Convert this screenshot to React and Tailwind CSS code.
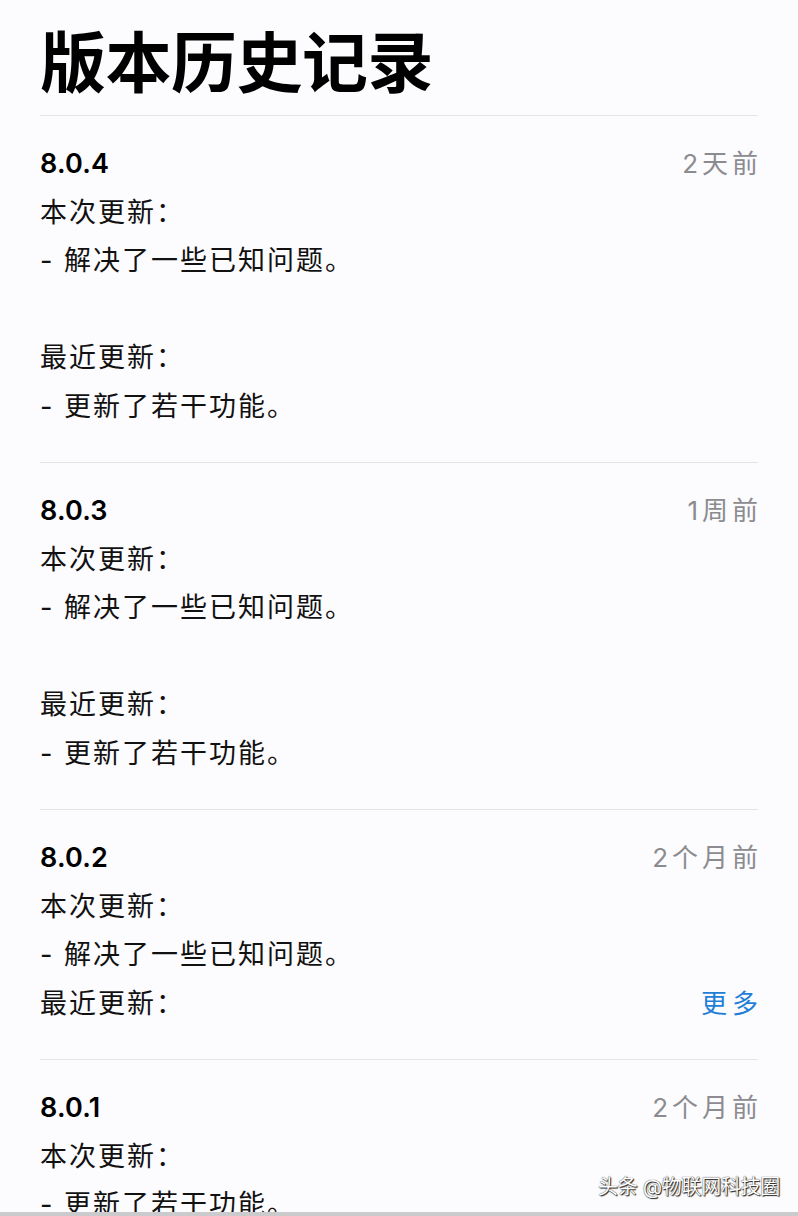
const versions = [
    {
        version: '8.0.4',
        date: '2天前',
        lines: ['本次更新：', '- 解决了一些已知问题。', '', '最近更新：', '- 更新了若干功能。'],
    },
    {
        version: '8.0.3',
        date: '1周前',
        lines: ['本次更新：', '- 解决了一些已知问题。', '', '最近更新：', '- 更新了若干功能。'],
    },
    {
        version: '8.0.2',
        date: '2个月前',
        lines: ['本次更新：', '- 解决了一些已知问题。', '最近更新：'],
        more: true,
    },
    {
        version: '8.0.1',
        date: '2个月前',
        lines: ['本次更新：', '- 更新了若干功能。', '最近更新：'],
    },
]

const font = { fontFamily: 'Inter, "Noto Sans CJK SC", sans-serif' }

function VersionBlock({ item }) {
    return (
        <div className="border-t border-[#e4e3e7] pt-6 pb-[31px]">
            <div className="flex items-center justify-between leading-[48.5px]">
                <span className="text-[27px] font-semibold text-black tracking-[0.2px]">{item.version}</span>
                <span className="text-[26px] text-[#8b8b90] tracking-[4px] -mr-[4px]">{item.date}</span>
            </div>
            {item.lines.map((line, i) => {
                const isLast = i === item.lines.length - 1
                return (
                    <div key={i} className="flex items-center justify-between h-[48.5px] leading-[48.5px] text-[27px] text-[#111] tracking-[2px]">
                        <span>{line}</span>
                        {item.more && isLast && <span className="text-[26px] text-[#1f7fd6] tracking-[5px] -mr-[5px]">更多</span>}
                    </div>
                )
            })}
        </div>
    )
}

export default function App() {
    return (
        <div className="relative flex flex-col h-[1216px] w-full overflow-hidden bg-[#fcfbfd]" style={font}>
            <div className="flex-1 overflow-hidden px-10">
                <h1 className="pt-[30px] mb-[19px] text-[66px] leading-none font-bold text-black tracking-[-0.5px]">
                    版本历史记录
                </h1>
                {versions.map((item) => (
                    <VersionBlock key={item.version} item={item} />
                ))}
            </div>
            <div className="h-1 shrink-0 bg-[#cbcbcd]"></div>

            {/* watermark */}
            <div className="absolute right-[18px] bottom-[14px] text-[20px] text-white tracking-[-0.3px] [text-shadow:0_0_1px_#000,1px_1px_1px_#222]">
                头条 @物联网科技圈
            </div>
        </div>
    )
}
